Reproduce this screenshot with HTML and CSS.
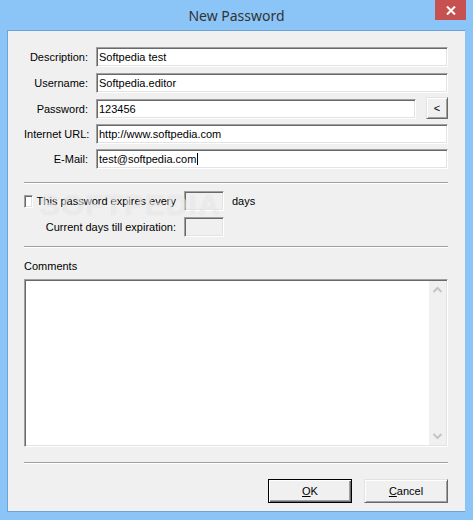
FILE: index.html
```html
<!DOCTYPE html>
<html lang="en">
<head>
  <meta charset="UTF-8">
  <title>New Password</title>
  <link rel="stylesheet" href="styles.css">
</head>
<body>
  <div class="window">
    <div class="titlebar">
      <span class="title">New Password</span>
      <span class="close">
        <svg width="10" height="9" viewBox="0 0 10 9"><path d="M1 0.5 L9 8.5 M9 0.5 L1 8.5" stroke="#fff" stroke-width="2"/></svg>
      </span>
    </div>

    <div class="client">
      <div class="watermark">SOFTPEDIA</div>

      <div class="fields">
        <label>Description:</label>
        <div class="edit">Softpedia test</div>

        <label>Username:</label>
        <div class="edit">Softpedia.editor</div>

        <label>Password:</label>
        <div class="pass-row">
          <div class="edit">123456</div>
          <button class="btn small">&lt;</button>
        </div>

        <label>Internet URL:</label>
        <div class="edit">http://www.softpedia.com</div>

        <label>E-Mail:</label>
        <div class="edit">test@softpedia.com<span class="caret"></span></div>
      </div>

      <div class="sep"></div>

      <div class="expiry">
        <div class="check-label"><span class="checkbox"></span>This password expires every</div>
        <div class="edit box off"></div>
        <span>days</span>
        <div class="right-label">Current days till expiration:</div>
        <div class="edit box off"></div>
      </div>

      <div class="sep sep-2"></div>

      <div class="comments-label">Comments</div>
      <div class="memo">
        <div class="memo-text"></div>
        <div class="scrollbar">
          <svg width="17" height="17" viewBox="0 0 17 17"><polyline points="4.5,11 8.5,7 12.5,11" fill="none" stroke="#c4c4c4" stroke-width="2"/></svg>
          <svg width="17" height="17" viewBox="0 0 17 17"><polyline points="4.5,6 8.5,10 12.5,6" fill="none" stroke="#c4c4c4" stroke-width="2"/></svg>
        </div>
      </div>

      <div class="sep sep-3"></div>

      <div class="buttons">
        <button class="btn default"><u>O</u>K</button>
        <button class="btn"><u>C</u>ancel</button>
      </div>
    </div>
  </div>
</body>
</html>
```

FILE: styles.css
```css
body {
  margin: 0;
  background: #8bc5f8;
  font-family: "Liberation Sans", Arial, sans-serif;
  font-size: 11px;
  color: #000;
}
.window {
  width: 473px;
  height: 520px;
  display: flex;
  flex-direction: column;
}
.titlebar {
  position: relative;
  height: 30px;
  display: flex;
  justify-content: center;
  align-items: center;
  font-family: "Noto Sans", sans-serif;
  font-size: 14px;
  color: #333;
}
.close {
  position: absolute;
  top: 0;
  right: 7px;
  width: 31px;
  height: 20px;
  background: #c75050;
  display: flex;
  justify-content: center;
  align-items: center;
}
.client {
  position: relative;
  flex: 1;
  margin: 0 8px 8px 7px;
  border: 1px solid #6ca2d6;
  border-right: none;
  background: #f0f0f0;
  padding: 16px 17px 0 16px;
}
.watermark {
  position: absolute;
  left: 32px;
  top: 157px;
  font-size: 30px;
  font-weight: bold;
  letter-spacing: 1px;
  color: rgba(255, 255, 255, 0.55);
  text-shadow: 0 0 1px rgba(0, 0, 0, 0.12);
  pointer-events: none;
}
.fields {
  display: grid;
  grid-template-columns: 64px 1fr;
  grid-template-rows: 26px 26px 25px 25px 20px;
  column-gap: 8px;
}
.fields label {
  line-height: 20px;
  text-align: right;
  white-space: nowrap;
}
.edit {
  box-sizing: border-box;
  height: 20px;
  background: #fff;
  border: 1px solid;
  border-color: #a0a0a0 #fff #fff #a0a0a0;
  box-shadow: inset 1px 1px #696969, inset -1px -1px #e3e3e3;
  padding: 0 2px;
  line-height: 18px;
  white-space: nowrap;
}
.edit.off {
  background: #f0f0f0;
}
.caret {
  display: inline-block;
  width: 1px;
  height: 12px;
  background: #000;
  vertical-align: -2px;
  margin-left: 1px;
}
.pass-row {
  display: flex;
  align-items: flex-start;
  gap: 10px;
}
.pass-row .edit {
  flex: 1;
}
.btn {
  box-sizing: border-box;
  background: #f0f0f0;
  border: 1px solid;
  border-color: #e3e3e3 #696969 #696969 #e3e3e3;
  box-shadow: inset 1px 1px #fff, inset -1px -1px #a0a0a0;
  font-family: "Liberation Sans", Arial, sans-serif;
  font-size: 11px;
  color: #000;
  padding: 0;
}
.btn.small {
  width: 22px;
  height: 22px;
  margin-top: -2px;
}
.btn.default {
  border-color: #000;
  box-shadow: inset 1px 1px #fff, inset -1px -1px #696969, inset -2px -2px #a0a0a0;
}
.sep {
  border-top: 1px solid #a0a0a0;
  border-bottom: 1px solid #fff;
  margin-top: 13px;
}
.sep-2 {
  margin-top: 9px;
}
.sep-3 {
  margin-top: 15px;
}
.expiry {
  display: grid;
  grid-template-columns: 152px 40px auto;
  grid-template-rows: 20px 20px;
  column-gap: 8px;
  row-gap: 6px;
  align-items: center;
  margin-top: 7px;
}
.check-label {
  display: flex;
  align-items: center;
  gap: 4px;
  white-space: nowrap;
}
.checkbox {
  box-sizing: border-box;
  width: 13px;
  height: 13px;
  background: #fff;
  border: 1px solid;
  border-color: #a0a0a0 #fff #fff #a0a0a0;
  box-shadow: inset 1px 1px #696969, inset -1px -1px #e3e3e3;
}
.right-label {
  text-align: right;
  white-space: nowrap;
}
.comments-label {
  margin-top: 12px;
  line-height: 13px;
}
.memo {
  box-sizing: border-box;
  height: 168px;
  margin-top: 6px;
  display: flex;
  background: #fff;
  border: 1px solid;
  border-color: #a0a0a0 #fff #fff #a0a0a0;
  box-shadow: inset 1px 1px #696969, inset -1px -1px #e3e3e3;
  padding: 1px;
}
.memo-text {
  flex: 1;
}
.scrollbar {
  width: 17px;
  background: #f0f0f0;
  display: flex;
  flex-direction: column;
  justify-content: space-between;
}
.scrollbar svg {
  display: block;
}
.buttons {
  display: flex;
  justify-content: flex-end;
  gap: 12px;
  margin-top: 15px;
}
.buttons .btn {
  width: 84px;
  height: 24px;
}
```
